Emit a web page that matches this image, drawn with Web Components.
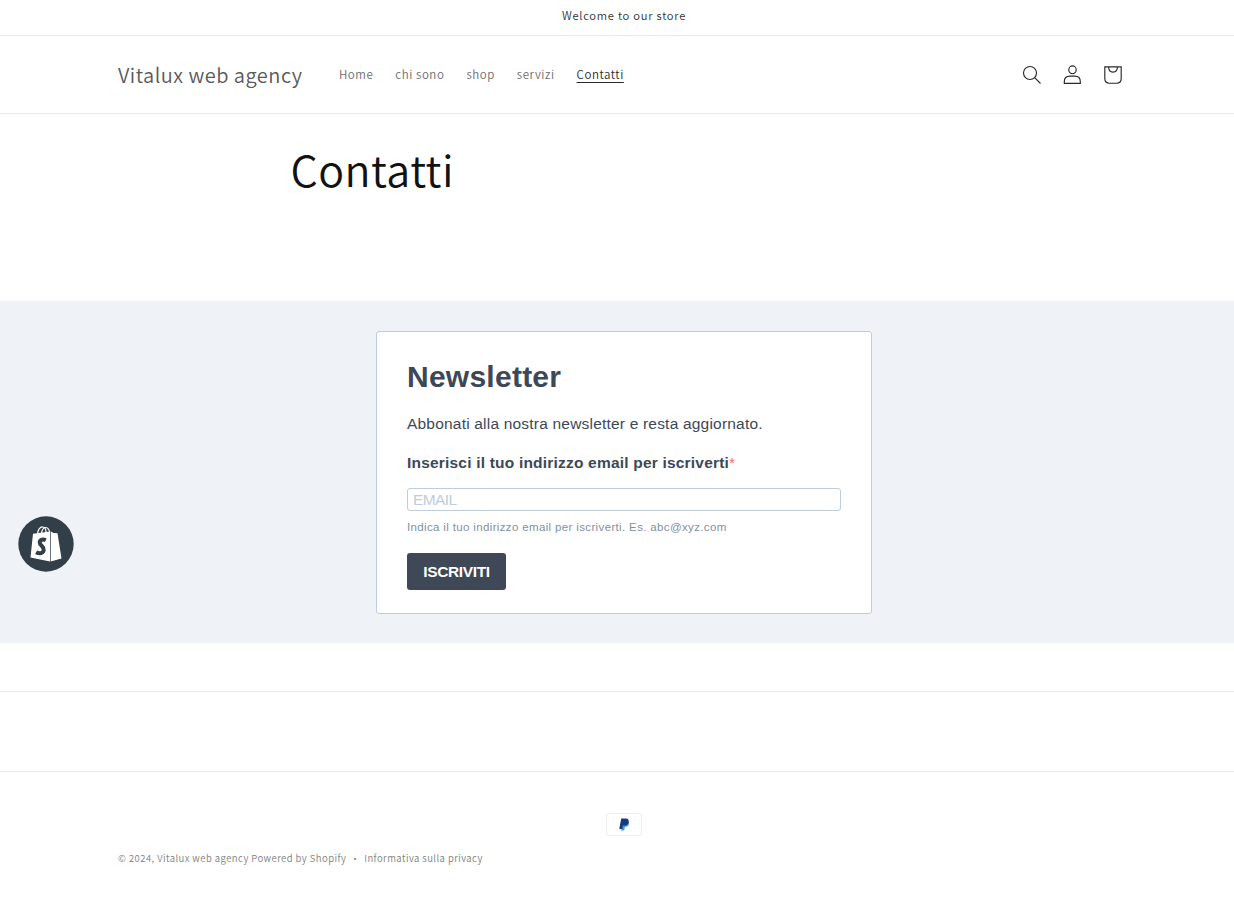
<!DOCTYPE html>
<html lang="it">
<head>
<meta charset="utf-8">
<title>Contatti – Vitalux web agency</title>
<style>
html,body{margin:0;background:#fff;overflow:hidden;height:900px}
body{font-family:"Noto Sans CJK SC","Noto Sans",sans-serif;font-weight:300;color:#555}
store-page{width:1248px}
</style>
</head>
<body>
<store-page></store-page>
<script>
const define = (name, html) => customElements.define(name, class extends HTMLElement {
  constructor() {
    super();
    const t = document.createElement('template');
    t.innerHTML = html;
    this.attachShadow({mode: 'open'}).append(t.content.cloneNode(true));
  }
});

define('announcement-bar', `<style>
:host{display:flex;justify-content:center;box-sizing:border-box;height:36px;border-bottom:1px solid #e9e9e9;font-size:11.2px;line-height:31px;letter-spacing:.74px;color:#333;font-weight:350}
</style><span><slot></slot></span>`);

define('nav-link', `<style>
:host{display:block;font-size:11.5px;line-height:20px;letter-spacing:.56px;color:#6c6c6c;font-weight:350}
:host([active]){color:#2a2a2a}
:host([active]) a{text-decoration:underline;text-underline-offset:3px;text-decoration-thickness:1px}
</style><a><slot></slot></a>`);

define('header-icons', `<style>
:host{display:flex;gap:20.5px;align-items:center;color:#2a2a2a}
svg{display:block;width:20px;height:20px;fill:none;stroke:currentColor;stroke-width:1.15}
</style>
<svg viewBox="0 0 20 20"><circle cx="8" cy="8" r="6.5"/><path d="M12.7 12.7 18.5 18.5"/></svg>
<svg viewBox="1 0 20 20"><ellipse cx="10.5" cy="4.8" rx="3.7" ry="3.9"/><path d="M2.3 18.3v-1.6c0-3.7 2.5-5.6 5.5-5.6h5.2c3 0 5.3 1.9 5.3 5.6v1.6z"/></svg>
<svg viewBox="0 0 20 20"><path d="M1.8 1.8h16.4v11.7c0 3.2-1.8 4.7-4.5 4.7H6.3c-2.7 0-4.5-1.5-4.5-4.7zM5.6 1.8c0 3.5 1.6 5.3 4.4 5.3s4.4-1.8 4.4-5.3"/></svg>`);

define('site-header', `<style>
:host{display:flex;align-items:center;box-sizing:border-box;height:78px;padding:0 125px 0 118px;border-bottom:1px solid #e9e9e9}
.logo{font-size:20px;line-height:30px;letter-spacing:.48px;color:#5a5a5a;width:221px;white-space:nowrap;font-weight:350}
nav{display:flex;gap:22px;flex:1;padding-bottom:2px}
</style><div class="logo">Vitalux web agency</div>
<nav><nav-link>Home</nav-link><nav-link>chi sono</nav-link><nav-link>shop</nav-link><nav-link>servizi</nav-link><nav-link active>Contatti</nav-link></nav>
<header-icons></header-icons>`);

define('page-title', `<style>
:host{display:block;height:187px;box-sizing:border-box;padding:25px 0 0 290.5px}
h1{margin:0;font-size:43px;line-height:59px;font-weight:350;letter-spacing:.45px;color:#121212}
</style><h1><slot></slot></h1>`);

define('newsletter-form', `<style>
:host{display:flex;justify-content:center;align-items:flex-start;box-sizing:border-box;height:342px;padding-top:30px;background:#eff2f7;font-family:"Liberation Sans",Arial,sans-serif;font-weight:400;color:#3c4858}
form{box-sizing:border-box;width:496px;height:283px;border:1px solid #c0ccd9;border-radius:3px;background:#fff;padding:25px 30px 0}
h2{margin:0;font-size:30px;line-height:40px;letter-spacing:.25px}
p{margin:0}
.lead{margin-top:17px;font-size:15.5px;line-height:20px;letter-spacing:.2px}
label{display:block;margin-top:19px;font-size:15.5px;line-height:20px;font-weight:700;letter-spacing:.2px}
i{color:#ff6b6b;font-style:normal;font-weight:400}
.field{box-sizing:border-box;height:23px;margin-top:15px;border:1px solid #c0ccda;border-radius:3px;padding:0 5px;font-size:15.5px;line-height:21px;letter-spacing:-.6px;color:#c0ccda}
.hint{margin-top:7px;font-size:11.5px;line-height:18px;letter-spacing:.355px;color:#8390a4}
button{display:block;width:99px;height:37px;margin-top:17px;padding:0;border:0;border-radius:3px;background:#3e4857;color:#fff;font:700 15.5px/36px "Liberation Sans",Arial,sans-serif;letter-spacing:-.35px}
</style>
<form><h2>Newsletter</h2>
<p class="lead">Abbonati alla nostra newsletter e resta aggiornato.</p>
<label>Inserisci il tuo indirizzo email per iscriverti<i>*</i></label>
<div class="field" role="textbox">EMAIL</div>
<p class="hint">Indica il tuo indirizzo email per iscriverti. Es. abc@xyz.com</p>
<button type="button">ISCRIVITI</button></form>`);

define('site-footer', `<style>
:host{display:block;margin-top:48px;border-top:1px solid #e9e9e9}
.bottom{margin-top:79px;border-top:1px solid #e9e9e9;padding:41px 0 0 118px;display:flex;flex-direction:column}
.pay{align-self:center;margin-left:-118px;box-sizing:border-box;width:36px;height:23px;border:1px solid #eee;border-radius:3px;display:flex;align-items:center;justify-content:center}
.pay svg{width:12px;height:13px;display:block;margin-bottom:1px}
.legal{display:flex;margin-top:12px;font-size:9.5px;line-height:20px;letter-spacing:.45px;color:#808080;font-weight:350;white-space:pre}
.dot{width:18px;text-align:center}
</style>
<div class="bottom"><div class="pay"><svg viewBox="0 0 12 14"><path fill="#3d9bd9" d="M4 4h7c1 2 0 5.5-3.5 5.5H7L6.2 13.5H3z"/><path fill="#143a80" d="M3 .5h5c2.6 0 3.5 1.5 3 4-.5 2.6-2 3.7-4.5 3.7H4.7L4 11.8H.9z"/></svg></div>
<div class="legal"><span>© 2024, Vitalux web agency Powered by Shopify</span><span class="dot">·</span><span>Informativa sulla privacy</span></div></div>`);

define('shop-badge', `<style>
:host{position:absolute;left:18px;top:516px;width:56px;height:56px}
svg{display:block}
</style><svg width="56" height="56" viewBox="0 0 56 56"><circle cx="28" cy="28" r="27.7" fill="#323e48"/>
<path fill="#fff" d="M15 17.7 32.3 15.6 32 45.6 12.5 41.5z"/><path fill="#fff" d="M33 15.6 35.5 17 39.5 17.3 43.5 42.5 32.7 45.6z"/>
<path fill="none" stroke="#fff" stroke-width="1.2" d="M19.5 18c.4-4.6 2.8-7.4 5.2-7.1 2 .2 3.2 2.6 3.4 5.5M23.5 17.5c.6-4 2.3-6.2 4.2-6 2 .2 3.5 2.2 3.8 4.5"/>
<path fill="none" stroke="#323e48" stroke-width="4" d="M27.8 24.2c-2.8-1.4-6-.6-6.1 2.2-.1 3.2 4.5 3.8 4 7.600-.4 3.300-4.200 4.200-7.600 2.200"/></svg>`);

define('store-page', `<style>:host{display:block;position:relative}</style>
<announcement-bar>Welcome to our store</announcement-bar>
<site-header></site-header>
<page-title>Contatti</page-title>
<newsletter-form></newsletter-form>
<site-footer></site-footer>
<shop-badge></shop-badge>`);
</script>
</body>
</html>
